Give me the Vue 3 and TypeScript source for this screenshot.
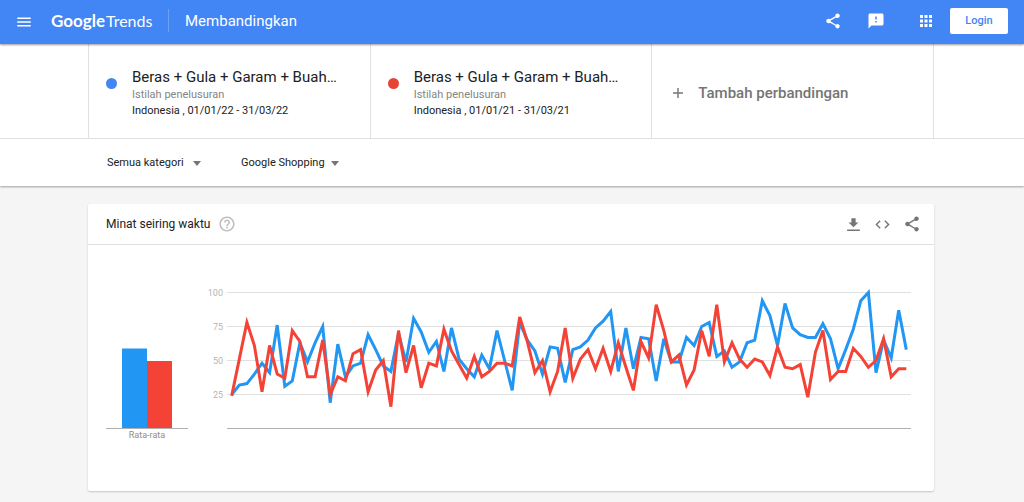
<script setup lang="ts">
interface Term {
  title: string
  kind: string
  scope: string
  color: string
}

const terms: Term[] = [
  { title: 'Beras + Gula + Garam + Buah…', kind: 'Istilah penelusuran', scope: 'Indonesia , 01/01/22 - 31/03/22', color: 'blue' },
  { title: 'Beras + Gula + Garam + Buah…', kind: 'Istilah penelusuran', scope: 'Indonesia , 01/01/21 - 31/03/21', color: 'red' },
]

const series2022: number[] = [
  25, 32, 33, 40, 48, 41, 76, 31, 35, 63, 49, 63, 75, 19, 62, 38, 46, 48, 69, 58,
  46, 42, 70, 49, 81, 71, 56, 64, 42, 74, 51, 44, 38, 54, 44, 72, 50, 28, 78, 65,
  57, 40, 60, 59, 34, 58, 60, 65, 74, 79, 86, 42, 74, 44, 67, 66, 35, 66, 49, 49,
  67, 61, 75, 78, 53, 57, 45, 49, 63, 65, 94, 83, 61, 92, 74, 69, 67, 67, 77, 66,
  44, 58, 73, 94, 100, 41, 65, 52, 87, 58,
]
const series2021: number[] = [
  24, 51, 78, 61, 27, 61, 40, 37, 72, 64, 38, 38, 65, 25, 38, 35, 55, 58, 27, 43,
  50, 16, 72, 41, 61, 30, 48, 46, 73, 57, 47, 37, 53, 38, 42, 48, 48, 46, 82, 64,
  41, 50, 27, 42, 74, 37, 51, 58, 44, 59, 42, 63, 45, 28, 64, 52, 91, 72, 49, 54,
  32, 43, 72, 53, 91, 49, 63, 51, 45, 51, 49, 39, 60, 45, 44, 47, 23, 56, 72, 36,
  42, 42, 59, 53, 45, 50, 66, 38, 44, 44,
]

const ticks: number[] = [100, 75, 50, 25]
const baseline = 143.5
const yOf = (value: number): number => baseline - value * 1.36
const toPoints = (values: number[]): string =>
  values.map((v, i) => `${(31.7 + i * 7.58).toFixed(1)},${yOf(v).toFixed(1)}`).join(' ')
</script>

<template>
  <div class="page">
    <header class="topbar">
      <button class="icon-btn menu" aria-label="Menu">
        <svg viewBox="0 0 24 24" width="18" height="18"><path d="M3 18h18v-2H3v2zm0-5h18v-2H3v2zm0-7v2h18V6H3z" /></svg>
      </button>
      <a class="logo" href="#"><span class="logo-google">Google</span><span class="logo-trends">Trends</span></a>
      <h1 class="page-title">Membandingkan</h1>
      <div class="top-actions">
        <button class="icon-btn" aria-label="Share">
          <svg viewBox="0 0 24 24" width="18" height="18"><path d="M18 16.080c-.76 0-1.440.3-1.960.77L8.910 12.700c.05-.23.09-.46.09-.7s-.04-.47-.09-.7l7.050-4.110c.54.5 1.250.81 2.040.81 1.660 0 3-1.340 3-3s-1.340-3-3-3-3 1.340-3 3c0 .24.04.47.09.7L8.040 9.810C7.500 9.310 6.790 9 6 9c-1.660 0-3 1.340-3 3s1.340 3 3 3c.79 0 1.500-.31 2.040-.81l7.120 4.160c-.05.21-.08.43-.08.65 0 1.610 1.310 2.920 2.920 2.920s2.920-1.310 2.920-2.920-1.310-2.920-2.920-2.920z" /></svg>
        </button>
        <button class="icon-btn feedback" aria-label="Feedback">
          <svg viewBox="0 0 24 24" width="18" height="18"><path d="M20 2H4c-1.100 0-1.990.9-1.990 2L2 22l4-4h14c1.100 0 2-.9 2-2V4c0-1.100-.9-2-2-2zm-7 12h-2v-2h2v2zm0-4h-2V6h2v4z" /></svg>
        </button>
        <button class="icon-btn apps" aria-label="Apps">
          <svg viewBox="0 0 24 24" width="18" height="18"><path d="M4 8h4V4H4v4zm6 12h4v-4h-4v4zm-6 0h4v-4H4v4zm0-6h4v-4H4v4zm6 0h4v-4h-4v4zm6-10v4h4V4h-4zm-6 4h4V4h-4v4zm6 6h4v-4h-4v4zm0 6h4v-4h-4v4z" /></svg>
        </button>
        <button class="login">Login</button>
      </div>
    </header>

    <section class="controls">
      <div class="terms">
        <div class="terms-grid">
          <div v-for="term in terms" :key="term.color" class="term">
            <span class="dot" :class="term.color"></span>
            <div class="term-text">
              <div class="term-title">{{ term.title }}</div>
              <div class="term-kind">{{ term.kind }}</div>
              <div class="term-scope">{{ term.scope }}</div>
            </div>
          </div>
          <button class="add">
            <svg viewBox="0 0 12 12" width="12" height="12"><path d="M6 1v10M1 6h10" /></svg>
            <span>Tambah perbandingan</span>
          </button>
        </div>
      </div>
      <div class="filters">
        <div class="filter">
          <select aria-label="Kategori"><option>Semua kategori</option></select>
          <svg viewBox="0 0 8 5" width="8" height="5"><path d="M0 0h8L4 5z" /></svg>
        </div>
        <div class="filter">
          <select aria-label="Jenis penelusuran"><option>Google Shopping</option></select>
          <svg viewBox="0 0 8 5" width="8" height="5"><path d="M0 0h8L4 5z" /></svg>
        </div>
      </div>
    </section>

    <main class="content">
      <article class="card">
        <div class="card-head">
          <h2>Minat seiring waktu</h2>
          <button class="icon-btn help" aria-label="Bantuan">
            <svg viewBox="0 0 24 24" width="18" height="18"><path d="M11 18h2v-2h-2v2zm1-16C6.480 2 2 6.480 2 12s4.480 10 10 10 10-4.480 10-10S17.520 2 12 2zm0 18c-4.410 0-8-3.590-8-8s3.590-8 8-8 8 3.590 8 8-3.590 8-8 8zm0-14c-2.210 0-4 1.790-4 4h2c0-1.100.9-2 2-2s2 .9 2 2c0 2-3 1.750-3 5h2c0-2.250 3-2.500 3-5 0-2.210-1.790-4-4-4z" /></svg>
          </button>
          <div class="card-actions">
            <button class="icon-btn" aria-label="Download">
              <svg viewBox="0 0 24 24" width="17" height="17"><path d="M19 9h-4V3H9v6H5l7 7 7-7zM3 19v2h18v-2H3z" /></svg>
            </button>
            <button class="icon-btn" aria-label="Embed">
              <svg viewBox="0 0 24 24" width="17" height="17"><path d="M9.400 16.600L4.800 12l4.600-4.600L8 6l-6 6 6 6 1.400-1.400zm5.200 0l4.600-4.600-4.600-4.600L16 6l6 6-6 6-1.400-1.400z" /></svg>
            </button>
            <button class="icon-btn" aria-label="Share">
              <svg viewBox="0 0 24 24" width="18" height="18"><path d="M18 16.080c-.76 0-1.440.3-1.960.77L8.910 12.700c.05-.23.09-.46.09-.7s-.04-.47-.09-.7l7.050-4.110c.54.5 1.250.81 2.040.81 1.660 0 3-1.340 3-3s-1.340-3-3-3-3 1.340-3 3c0 .24.04.47.09.7L8.040 9.810C7.500 9.310 6.790 9 6 9c-1.660 0-3 1.340-3 3s1.340 3 3 3c.79 0 1.500-.31 2.040-.81l7.120 4.160c-.05.21-.08.43-.08.65 0 1.610 1.310 2.920 2.920 2.920s2.920-1.310 2.920-2.920-1.310-2.920-2.920-2.920z" /></svg>
            </button>
          </div>
        </div>
        <div class="charts">
          <svg class="chart" viewBox="0 0 82 160" role="img" aria-label="Rata-rata">
            <rect class="fill-blue" x="16" y="63.5" width="25" height="80" />
            <rect class="fill-red" x="41" y="76" width="25" height="67.5" />
            <line class="axis" x1="0" x2="82" y1="143.5" y2="143.5" />
            <text class="average" x="41" y="153" text-anchor="middle">Rata-rata</text>
          </svg>
          <svg class="chart" viewBox="0 0 711 160" role="img" aria-label="Minat seiring waktu">
            <g v-for="tick in ticks" :key="tick">
              <line class="grid" x1="27" x2="711" :y1="yOf(tick)" :y2="yOf(tick)" />
              <text class="tick" x="23" :y="yOf(tick) + 3" text-anchor="end">{{ tick }}</text>
            </g>
            <line class="axis" x1="27" x2="711" y1="143.5" y2="143.5" />
            <polyline class="line-blue" :points="toPoints(series2022)" />
            <polyline class="line-red" :points="toPoints(series2021)" />
          </svg>
        </div>
      </article>
    </main>
  </div>
</template>

<style>
body {
  background: #f5f5f5;
}
</style>

<style scoped>
.page {
  font-family: Roboto, "Liberation Sans", sans-serif;
  color: #212121;
}
button,
select {
  font-family: inherit;
  border: 0;
  background: none;
  padding: 0;
  margin: 0;
}
svg {
  display: block;
}
.icon-btn {
  display: block;
  fill: currentColor;
  color: inherit;
}
.topbar {
  position: relative;
  display: flex;
  align-items: center;
  box-sizing: border-box;
  height: 44px;
  padding: 0 16px 3px;
  background: #4285f4;
  color: #fff;
  box-shadow: 0 1px 2px rgba(0, 0, 0, 0.4);
}
.icon-btn.menu {
  margin: 2px 18px 0 -1px;
}
.logo {
  display: flex;
  align-items: baseline;
  gap: 1px;
  width: 118px;
  box-sizing: border-box;
  border-right: 1px solid #6ba0f6;
  color: #fff;
  font-family: Lato, sans-serif;
  font-size: 16px;
  line-height: 23px;
  text-decoration: none;
}
.logo-google {
  font-size: 17px;
  font-weight: 700;
}
.page-title {
  margin: 0 0 0 16px;
  font-size: 15px;
  line-height: 20px;
  font-weight: 400;
}
.top-actions {
  display: flex;
  align-items: center;
  margin-left: auto;
}
.feedback {
  margin-left: 25px;
}
.apps {
  margin-left: 32px;
}
.login {
  width: 58px;
  height: 26px;
  margin-left: 15px;
  border-radius: 2px;
  background: #fff;
  color: #4285f4;
  font-size: 11px;
  font-weight: 500;
}
.controls {
  background: #fff;
  box-shadow: 0 1px 2px rgba(0, 0, 0, 0.35);
}
.terms {
  padding: 0 90px 0 88px;
  border-bottom: 1px solid #e0e0e0;
}
.terms-grid {
  display: grid;
  grid-template-columns: repeat(3, 1fr);
  border-left: 1px solid #e0e0e0;
}
.term,
.add {
  display: flex;
  align-items: center;
  box-sizing: border-box;
  height: 94px;
  border-right: 1px solid #e0e0e0;
}
.term {
  padding: 4px 17px 0;
  gap: 15px;
}
.dot {
  flex: none;
  width: 11px;
  height: 11px;
  margin-bottom: 20px;
  border-radius: 50%;
}
.dot.blue {
  background: #4285f4;
}
.dot.red {
  background: #ea4335;
}
.term-text {
  min-width: 0;
  font-size: 11px;
  line-height: 16px;
  white-space: nowrap;
}
.term-title {
  font-size: 15px;
  line-height: 20px;
}
.term-kind {
  color: #858585;
}
.add {
  gap: 14px;
  padding: 4px 20px 0;
  color: #757575;
  font-size: 15px;
  font-weight: 500;
}
.add path {
  stroke: currentColor;
  stroke-width: 1.4;
}
.filters {
  display: flex;
  gap: 40px;
  padding: 14px 107px 13px;
}
.filter {
  display: flex;
  align-items: center;
  gap: 9px;
}
.filter + .filter {
  gap: 6px;
}
.filter select {
  appearance: none;
  color: #212121;
  font-size: 11px;
  line-height: 20px;
  height: 20px;
}
.filter path {
  fill: #757575;
}
.content {
  padding: 18px 90px 10px 88px;
}
.card {
  background: #fff;
  border-radius: 2px;
  box-shadow: 0 1px 2px rgba(0, 0, 0, 0.2);
}
.card-head {
  display: flex;
  align-items: center;
  box-sizing: border-box;
  height: 41px;
  padding: 0 13px 0 18px;
  border-bottom: 1px solid #e0e0e0;
}
.card-head h2 {
  margin: 0 8px 0 0;
  font-size: 12px;
  line-height: 20px;
  font-weight: 400;
}
.help {
  color: #bdbdbd;
}
.card-actions {
  display: flex;
  align-items: center;
  gap: 12px;
  margin-left: auto;
  color: #757575;
}
.charts {
  display: grid;
  grid-template-columns: 82fr 711fr;
  gap: 12px;
  padding: 40px 23px 46px 18px;
}
.chart {
  width: 100%;
}
.fill-blue {
  fill: #2196f3;
}
.fill-red {
  fill: #f44336;
}
.axis {
  stroke: #b0b0b0;
}
.grid {
  stroke: #e0e0e0;
}
.tick {
  fill: #b5b5b5;
  font-size: 9px;
}
.average {
  fill: #8e8e8e;
  font-size: 9px;
}
.line-blue,
.line-red {
  fill: none;
  stroke-width: 3;
}
.line-blue {
  stroke: #2196f3;
}
.line-red {
  stroke: #f44336;
}
</style>
